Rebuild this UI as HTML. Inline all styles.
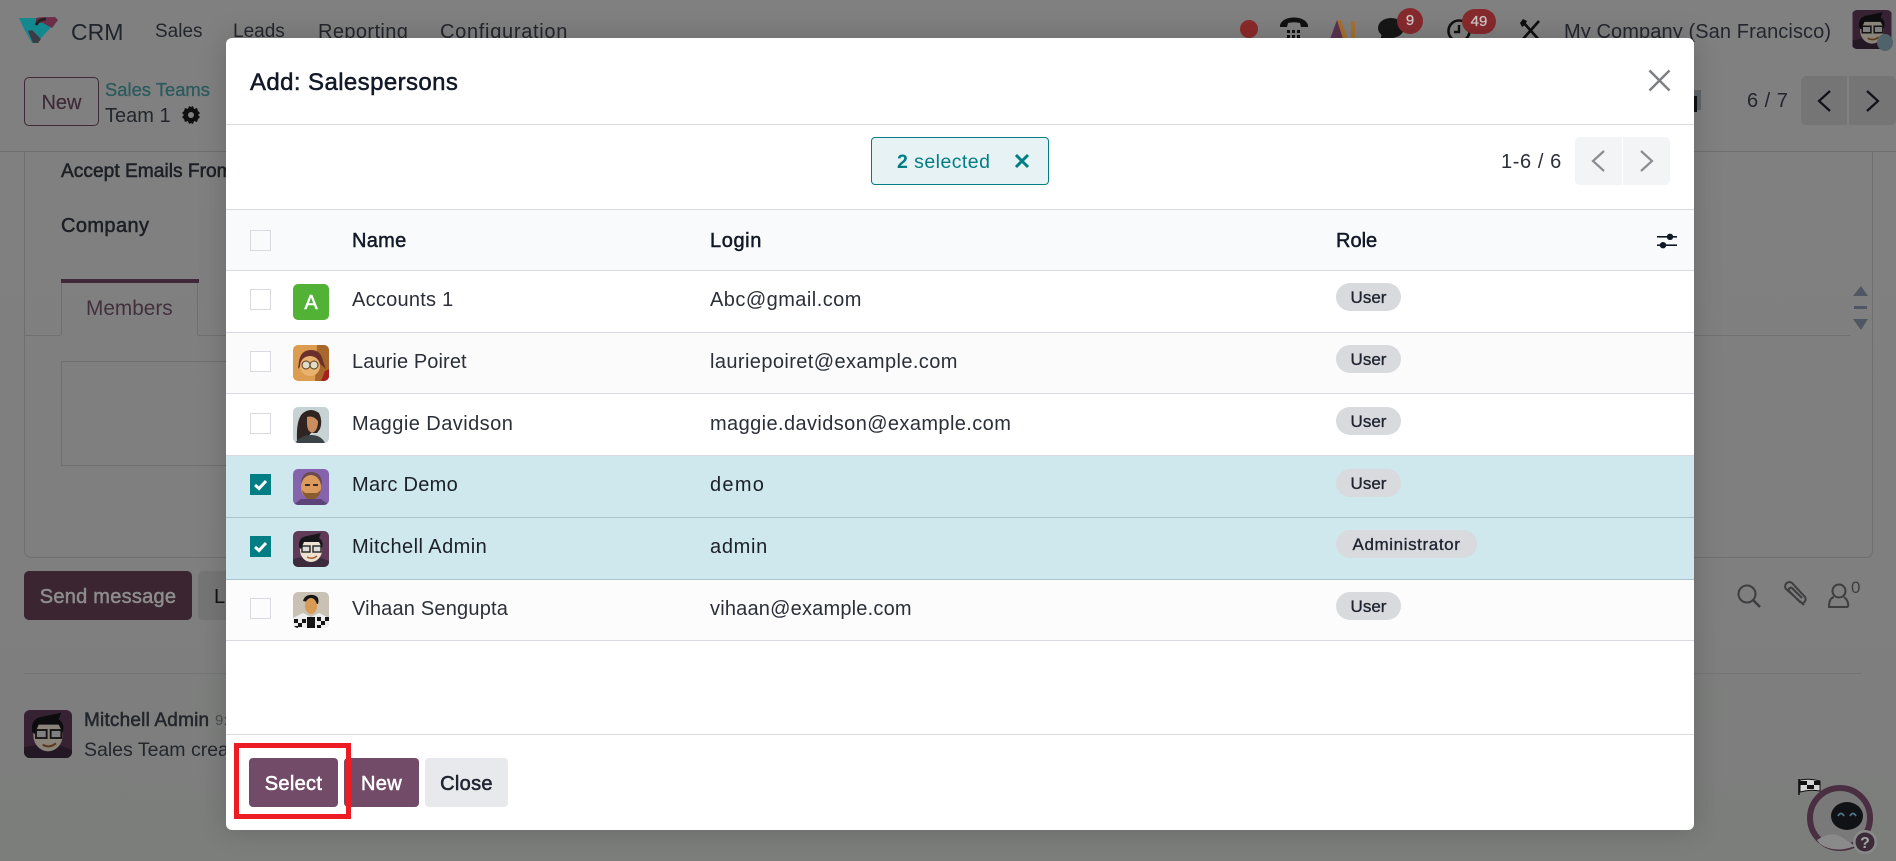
<!DOCTYPE html>
<html lang="en"><head><meta charset="utf-8"><title>Add: Salespersons</title>
<style>
html,body{margin:0;padding:0}
body{position:relative;width:1896px;height:861px;overflow:hidden;background:linear-gradient(180deg,#808080 0%,#7f7f7f 60%,#7c7e7c 100%);font-family:"Liberation Sans",sans-serif;font-size:20px;color:#2b2f38}
.a{position:absolute}
.t{position:absolute;white-space:nowrap;line-height:28px;height:28px}
.n{color:#23262c;font-size:19px}
.m{-webkit-text-stroke:.5px currentColor}
.ln{position:absolute;background:#6f7170}
.row{position:absolute;left:226px;width:1468px;box-sizing:border-box;border-bottom:1px solid #d8dadf}
.cb{position:absolute;left:250px;width:19px;height:19px;border:1px solid #d8dadf;background:#fff}
.cb.on{width:21px;height:21px;border:0;background:#017e84}
.cb.on svg{position:absolute;left:0;top:0}
.av{position:absolute;left:293px;width:36px;height:36px;border-radius:5px;overflow:hidden}
.pill{position:absolute;left:1336px;height:28px;line-height:30px;border-radius:14px;background:#d8dadd;color:#1f2430;font-size:17px;text-align:center;-webkit-text-stroke:.35px currentColor}
.btn{position:absolute;top:758px;height:49px;line-height:53px;border-radius:4px;text-align:center;font-size:20px;letter-spacing:.3px;-webkit-text-stroke:.55px currentColor}
</style></head><body>

<!-- background nav -->
<svg class="a" style="left:19px;top:17px" width="40" height="26" viewBox="0 0 40 26">
<path d="M0 1H16L34 8 24 19 17 26H13L5 12Z" fill="#13888e"/><path d="M17 1Q20 0 36 0L39 3 33 11 24 6 17 5Z" fill="#6d2f48"/><path d="M9 14 13 13 22 22 19 26H14Z" fill="#3d3a48"/><path d="M17 8Q20 2 27 2" stroke="#222" stroke-width="3" fill="none"/></svg>
<div class="t" style="left:71px;top:18px;font-size:23px;color:#20242c">CRM</div>
<div class="t n" style="left:155px;top:18px">Sales</div>
<div class="t n" style="left:233px;top:18px">Leads</div>
<div class="t n" style="left:318px;top:18px;font-size:20px;letter-spacing:.4px">Reporting</div>
<div class="t n" style="left:440px;top:18px;font-size:20px;letter-spacing:.7px">Configuration</div>
<div class="a" style="left:1240px;top:20px;width:18px;height:18px;border-radius:50%;background:#8b2a2a"></div>
<svg class="a" style="left:1279px;top:15px" width="30" height="26" viewBox="0 0 30 26"><path d="M1 10C4 0 26 0 29 10L29 12H22L21 8C17 7 13 7 9 8L8 12H1Z" fill="#111"/><path d="M8 15h3v3H8zM13 15h3v3h-3zM18 15h3v3h-3zM8 20h3v3H8zM13 20h3v3h-3zM18 20h3v3h-3z" fill="#111"/></svg>
<svg class="a" style="left:1329px;top:18px" width="28" height="24" viewBox="0 0 28 24"><path d="M8 2 0 24H16Z" fill="#5a3352"/><path d="M8 2 12 2 20 24H15Z" fill="#a8702d"/><rect x="22" y="3" width="4" height="21" fill="#a8702d"/></svg>
<svg class="a" style="left:1377px;top:18px" width="32" height="24" viewBox="0 0 32 24"><ellipse cx="14" cy="10" rx="13" ry="10" fill="#161616"/><path d="M5 15 3 23 14 19Z" fill="#161616"/><path d="M12 22H28" stroke="#161616" stroke-width="3"/></svg>
<div class="a" style="left:1397px;top:8px;width:26px;height:26px;border-radius:50%;background:#862a2d;color:#cfc4c4;font-size:15px;line-height:26px;text-align:center;-webkit-text-stroke:.3px #cfc4c4">9</div>
<svg class="a" style="left:1446px;top:18px" width="28" height="26" viewBox="0 0 28 26"><circle cx="13" cy="13" r="10.500" fill="none" stroke="#111" stroke-width="2.600"/><path d="M13 7V14H8" stroke="#111" stroke-width="2.400" fill="none"/></svg>
<div class="a" style="left:1462px;top:9px;width:34px;height:25px;border-radius:13px;background:#862a2d;color:#cfc4c4;font-size:15px;line-height:25px;text-align:center;-webkit-text-stroke:.3px #cfc4c4">49</div>
<svg class="a" style="left:1519px;top:18px" width="24" height="24" viewBox="0 0 24 24"><path d="M5 5 21 23M20 3 4 21" stroke="#0e0e0e" stroke-width="2.600" fill="none"/><path d="M1 5 4 1 8 3 6 7 3 9Z" fill="#0e0e0e"/></svg>
<div class="t n" style="left:1564px;top:18px;font-size:20px;letter-spacing:.1px">My Company (San Francisco)</div>
<svg class="a" style="left:1852px;top:10px;border-radius:5px;filter:brightness(.58)" width="40" height="39" viewBox="0 0 36 36"><use href="#mitch"/></svg>
<div class="a" style="left:1877px;top:34px;width:16px;height:17px;border-radius:50%;background:#50626a"></div>

<!-- control panel -->
<div class="a" style="left:24px;top:77px;width:73px;height:47px;border:1px solid #3f2b38;border-radius:5px;color:#3f2b38;text-align:center;line-height:50px;font-size:20px;-webkit-text-stroke:.2px #3f2b38">New</div>
<div class="t" style="left:105px;top:76px;font-size:18.400px;color:#2c5a5e;-webkit-text-stroke:.3px #2c5a5e">Sales Teams</div>
<div class="t" style="left:105px;top:102px;font-size:20px;color:#23262c">Team 1</div>
<svg class="a" style="left:181px;top:105px" width="20" height="20" viewBox="0 0 20 20"><path d="M10 2 12 1 13 4 16 3 17 6 19 8 17 10 19 12 17 14 16 17 13 16 12 19 10 18 8 19 7 16 4 17 3 14 1 12 3 10 1 8 3 6 4 3 7 4 8 1Z" fill="#0f0f0f"/><circle cx="10" cy="10" r="3" fill="#808080"/></svg>
<div class="t" style="left:1747px;top:87px;font-size:20px;letter-spacing:.5px;color:#23262c">6 / 7</div>
<div class="a" style="left:1801px;top:76px;width:46px;height:49px;background:#757575;border-radius:5px 0 0 5px"></div>
<div class="a" style="left:1849px;top:76px;width:47px;height:49px;background:#757575;border-radius:0 5px 5px 0"></div>
<svg class="a" style="left:1801px;top:76px" width="95" height="49" viewBox="0 0 95 49" fill="none" stroke="#101218" stroke-width="2.200"><path d="M29 15 18 25 29 35"/><path d="M66 15 77 25 66 35"/></svg>
<div class="a" style="left:1694px;top:90px;width:7px;height:20px;background:#5e6468"></div>
<div class="a" style="left:1690px;top:96px;width:7px;height:16px;background:#101010"></div>
<div class="ln" style="left:0;top:151px;width:1896px;height:1px;background:#6d6f6e"></div>

<!-- sheet -->
<div class="a" style="left:24px;top:152px;width:1847px;height:405px;border:1px solid #6d6f6e;border-top:0;border-radius:0 0 7px 7px"></div>
<div class="t m" style="left:61px;top:158px;font-size:19.200px;color:#1c1f25">Accept Emails From</div>
<div class="t m" style="left:61px;top:212px;font-size:20px;letter-spacing:.4px;color:#1c1f25">Company</div>
<div class="a" style="left:61px;top:279px;width:138px;height:4px;background:#40283a"></div>
<div class="a" style="left:61px;top:283px;width:135px;height:52px;border:1px solid #6d6f6e;border-top:0;border-bottom:0"></div>
<div class="t" style="left:86px;top:294px;font-size:20.800px;line-height:29px;color:#42303d">Members</div>
<div class="ln" style="left:24px;top:335px;width:37px;height:1px"></div>
<div class="ln" style="left:198px;top:335px;width:1652px;height:1px"></div>
<div class="a" style="left:61px;top:361px;width:1500px;height:103px;border:1px solid #6d6f6e"></div>
<svg class="a" style="left:1853px;top:284px" width="17" height="48" viewBox="0 0 17 48"><path d="M8 2 15 12H0Z" fill="#4e5763"/><rect x="1" y="22" width="13" height="3" fill="#4e5763"/><path d="M0 35H15L8 46Z" fill="#4e5763"/></svg>

<!-- chatter -->
<div class="a m" style="left:24px;top:571px;width:168px;height:49px;background:#3a2531;border-radius:5px;color:#8d8d8d;text-align:center;line-height:53px;font-size:20px;letter-spacing:.25px">Send message</div>
<div class="a" style="left:198px;top:571px;width:40px;height:49px;background:#757575;border-radius:5px;color:#111;line-height:53px;padding-left:16px;font-size:20px;box-sizing:border-box">L</div>
<svg class="a" style="left:1736px;top:582px" width="26" height="28" viewBox="0 0 26 28" fill="none" stroke="#3e3d40" stroke-width="2"><circle cx="11" cy="12" r="8.500"/><path d="M17 18 24 25" stroke-width="2.600"/></svg>
<svg class="a" style="left:1781px;top:580px" width="27" height="29" viewBox="0 0 27 29" fill="none" stroke="#3e3d40" stroke-width="2"><path d="M23 25 5 9C2 5 7 0 11 3L24 17C26 20 23 25 19 22L8 11C7 9 9 7 11 8L21 18"/></svg>
<svg class="a" style="left:1828px;top:583px" width="22" height="26" viewBox="0 0 22 26" fill="none" stroke="#3e3d40" stroke-width="2"><circle cx="11" cy="8" r="6.500"/><path d="M6 14C2 15 1 19 1 24H19C21 24 21 18 16 14"/></svg>
<div class="a" style="left:1851px;top:578px;font-size:17px;line-height:20px;color:#3e3d40">0</div>
<div class="ln" style="left:24px;top:673px;width:1837px;height:1px;background:#727473"></div>
<svg class="a" style="left:24px;top:710px;border-radius:6px;filter:brightness(.58)" width="48" height="48" viewBox="0 0 36 36"><use href="#mitch"/></svg>
<div class="t m" style="left:84px;top:707px;font-size:19px;letter-spacing:.2px;color:#23262c">Mitchell Admin</div>
<div class="t" style="left:215px;top:707px;font-size:15px;color:#4d4d4d">9:</div>
<div class="t" style="left:84px;top:736px;font-size:19.500px;color:#23262c">Sales Team created</div>

<!-- bot -->
<svg class="a" style="left:1795px;top:776px" width="90" height="85" viewBox="0 0 90 85"><circle cx="45" cy="42" r="30" fill="#797979" stroke="#4a2f42" stroke-width="6"/><path d="M22 64Q35 55 45 60L60 70Q40 78 25 68Z" fill="#8a8a8a"/><ellipse cx="52" cy="40" rx="16" ry="14" fill="#111215"/><path d="M43 40Q46 35 49 40M55 40Q58 35 61 40" stroke="#4d7a8c" stroke-width="1.800" fill="none"/><path d="M4 3V19" stroke="#111" stroke-width="1.600"/><path d="M5 4Q15 2 25 5V15Q15 13 5 16Z" fill="#d6d6d6" stroke="#111"/><path d="M5 5h7v4H5zM12 9h7v4h-7zM19 5h6v4h-6z" fill="#111"/><circle cx="70" cy="66" r="12" fill="#8a8a8a"/><circle cx="70" cy="66" r="9.500" fill="#3b2b38"/><text x="70" y="72" font-family="Liberation Sans" font-size="16" font-weight="bold" fill="#a5a5a5" text-anchor="middle">?</text></svg>

<!-- modal -->
<div class="a" style="left:226px;top:38px;width:1468px;height:792px;background:#fff;border-radius:6px;box-shadow:0 0 28px rgba(0,0,0,.18)"></div>
<div class="t m" style="left:250px;top:69px;font-size:24px;letter-spacing:.4px;color:#111827">Add: Salespersons</div>
<svg class="a" style="left:1647px;top:68px" width="25" height="25" viewBox="0 0 25 25" stroke="#7d7f83" stroke-width="2.400" fill="none"><path d="M2.500 2.500 22.500 22.500M22.500 2.500 2.500 22.500"/></svg>
<div class="a" style="left:226px;top:124px;width:1468px;height:1px;background:#dadbdd"></div>

<div class="a" style="left:871px;top:137px;width:176px;height:46px;border:1px solid #017e84;border-radius:4px;background:#e6f2f3"></div>
<div class="t" style="left:897px;top:148px;color:#017e84;font-size:19.500px;letter-spacing:.45px"><b>2</b> selected</div>
<svg class="a" style="left:1014px;top:153px" width="16" height="16" viewBox="0 0 16 16" stroke="#017e84" stroke-width="3" fill="none"><path d="M2 2 14 14M14 2 2 14"/></svg>
<div class="t" style="left:1501px;top:148px;color:#2b2f38;font-size:20px;letter-spacing:.6px">1-6 / 6</div>
<div class="a" style="left:1575px;top:137px;width:47px;height:48px;background:#f3f4f6;border-radius:5px 0 0 5px"></div>
<div class="a" style="left:1623px;top:137px;width:47px;height:48px;background:#f3f4f6;border-radius:0 5px 5px 0"></div>
<svg class="a" style="left:1575px;top:137px" width="95" height="48" viewBox="0 0 95 48" fill="none" stroke="#8a8d92" stroke-width="2.200"><path d="M29 14 18 24 29 34"/><path d="M66 14 77 24 66 34"/></svg>

<div class="row" style="top:209px;height:62px;background:#f9fafb;border-top:1px solid #d8dadf"></div>
<div class="row" style="top:271px;height:62px;background:#fff"></div>
<div class="row" style="top:333px;height:61px;background:#fbfbfc"></div>
<div class="row" style="top:394px;height:62px;background:#fff"></div>
<div class="row" style="top:456px;height:62px;background:#cfe8ed;border-bottom-color:#a9c4ca"></div>
<div class="row" style="top:518px;height:62px;background:#cfe8ed;border-bottom-color:#a9c4ca"></div>
<div class="row" style="top:580px;height:61px;background:#fcfcfc"></div>

<div class="cb" style="top:230px;background:#f9fafb"></div>
<div class="t m" style="left:352px;top:227px;letter-spacing:.3px;color:#111827">Name</div>
<div class="t m" style="left:710px;top:227px;letter-spacing:.6px;color:#111827">Login</div>
<div class="t m" style="left:1336px;top:227px;color:#111827">Role</div>
<svg class="a" style="left:1656px;top:231px" width="22" height="20" viewBox="0 0 22 20" fill="#111827"><rect x="1" y="5" width="20" height="1.600"/><rect x="1" y="13.400" width="20" height="1.600"/><circle cx="14" cy="5.800" r="3.200"/><circle cx="7" cy="14.200" r="3.200"/></svg>

<div class="cb" style="top:289px"></div>
<div class="av" style="top:284px;background:#52b236;color:#fff;text-align:center;line-height:38px;font-size:20px;-webkit-text-stroke:.5px #fff">A</div>
<div class="t" style="left:352px;top:286px;letter-spacing:.25px">Accounts 1</div>
<div class="t" style="left:710px;top:286px;letter-spacing:.46px">Abc@gmail.com</div>
<div class="pill" style="top:283px;width:65px">User</div>

<div class="cb" style="top:351px"></div>
<div class="av" style="top:345px"><svg width="36" height="36" viewBox="0 0 36 36"><rect width="36" height="36" fill="#dc9d50"/><path d="M24 0H36V36H22Z" fill="#a8682c"/><path d="M6 16Q8 5 18 5 28 5 30 16L33 24 26 18H10L5 24Z" fill="#6d2f2c"/><circle cx="17" cy="21" r="10" fill="#eab26f"/><circle cx="13" cy="20" r="4" fill="#e0dcc8" stroke="#5a3a22"/><circle cx="21" cy="20" r="4" fill="#e0dcc8" stroke="#5a3a22"/><path d="M32 26 36 24V36H28Z" fill="#a81f1f"/></svg></div>
<div class="t" style="left:352px;top:348px;letter-spacing:.1px">Laurie Poiret</div>
<div class="t" style="left:710px;top:348px;letter-spacing:.4px">lauriepoiret@example.com</div>
<div class="pill" style="top:345px;width:65px">User</div>

<div class="cb" style="top:413px"></div>
<div class="av" style="top:407px"><svg width="36" height="36" viewBox="0 0 36 36"><rect width="36" height="36" fill="#c6d2d4"/><path d="M4 34Q3 12 10 6 18 0 26 6 30 14 27 22L24 26H18L12 34Z" fill="#2f2422"/><path d="M14 10Q20 8 25 14 25 24 19 26 14 24 14 17Z" fill="#c98d5e"/><path d="M2 36Q8 28 18 28 28 28 32 36Z" fill="#3b4346"/></svg></div>
<div class="t" style="left:352px;top:410px;letter-spacing:.45px">Maggie Davidson</div>
<div class="t" style="left:710px;top:410px;letter-spacing:.4px">maggie.davidson@example.com</div>
<div class="pill" style="top:407px;width:65px">User</div>

<div class="cb on" style="top:474px"><svg width="21" height="21" viewBox="0 0 21 21" fill="none" stroke="#fff" stroke-width="3"><path d="M5 11 9 14.500 16 7"/></svg></div>
<div class="av" style="top:469px"><svg width="36" height="36" viewBox="0 0 36 36"><rect width="36" height="36" fill="#8564ad"/><path d="M8 14Q9 3 18 3 28 3 29 14L27 18H10Z" fill="#6a4a52"/><ellipse cx="18" cy="18" rx="10" ry="12" fill="#dc9b5c"/><path d="M9 21Q11 30 18 31 26 30 28 21L24 24H12Z" fill="#8a5a30"/><path d="M12 16h5M20 16h5" stroke="#3a2a2a" stroke-width="2"/><path d="M0 36 8 30 28 30 36 36Z" fill="#5c4378"/></svg></div>
<div class="t" style="left:352px;top:471px;letter-spacing:.3px;color:#1b1f27">Marc Demo</div>
<div class="t" style="left:710px;top:471px;letter-spacing:1.3px;color:#1b1f27">demo</div>
<div class="pill" style="top:469px;width:65px">User</div>

<div class="cb on" style="top:536px"><svg width="21" height="21" viewBox="0 0 21 21" fill="none" stroke="#fff" stroke-width="3"><path d="M5 11 9 14.500 16 7"/></svg></div>
<div class="av" style="top:531px"><svg width="36" height="36" viewBox="0 0 36 36"><use href="#mitch"/></svg></div>
<div class="t" style="left:352px;top:533px;letter-spacing:.45px;color:#1b1f27">Mitchell Admin</div>
<div class="t" style="left:710px;top:533px;letter-spacing:.7px;color:#1b1f27">admin</div>
<div class="pill" style="top:530px;width:141px;letter-spacing:.6px">Administrator</div>

<div class="cb" style="top:598px;background:#fcfcfc"></div>
<div class="av" style="top:592px"><svg width="36" height="36" viewBox="0 0 36 36"><rect width="36" height="36" fill="#c9c2b4"/><path d="M10 9Q12 2 20 3 27 4 25 12Z" fill="#151515"/><ellipse cx="18" cy="14" rx="6" ry="8" fill="#d99a55"/><path d="M0 36V26L10 21 18 25 26 21 36 26V36Z" fill="#eee"/><path d="M1 27h4v4H1zM5 31h4v4H5zM9 27h4v4H9zM1 34h4v2H1zM24 25h4v4h-4zM28 29h4v4h-4zM32 25h4v4h-4zM24 33h4v3h-4zM14 25h8v11h-8z" fill="#151515"/></svg></div>
<div class="t" style="left:352px;top:595px;letter-spacing:.2px">Vihaan Sengupta</div>
<div class="t" style="left:710px;top:595px;letter-spacing:.2px">vihaan@example.com</div>
<div class="pill" style="top:592px;width:65px">User</div>

<div class="a" style="left:226px;top:734px;width:1468px;height:1px;background:#dadbdd"></div>
<div class="btn" style="left:249px;width:89px;background:#714b67;color:#fff">Select</div>
<div class="btn" style="left:344px;width:75px;background:#714b67;color:#fff">New</div>
<div class="btn" style="left:425px;width:83px;background:#e7e9ed;color:#1f2430">Close</div>
<div class="a" style="left:234px;top:743px;width:107px;height:66px;border:5px solid #ed1c24"></div>

<svg width="0" height="0" style="position:absolute"><defs><g id="mitch"><rect width="36" height="36" fill="#5f3b58"/><path d="M0 28 10 26 26 26 36 30V36H0Z" fill="#3c2a3d"/><ellipse cx="18" cy="19" rx="11" ry="12" fill="#eee3d2"/><path d="M6 16Q5 6 14 5L28 2 26 7Q31 10 29 17L26 11H11L8 18Z" fill="#17171b"/><rect x="9" y="15" width="8" height="6" fill="#dcdcdc" stroke="#222" stroke-width="1.400"/><rect x="20" y="15" width="8" height="6" fill="#dcdcdc" stroke="#222" stroke-width="1.400"/><path d="M14 26Q19 29 24 25" stroke="#a5602c" stroke-width="1.500" fill="none"/></g></defs></svg>
</body></html>
